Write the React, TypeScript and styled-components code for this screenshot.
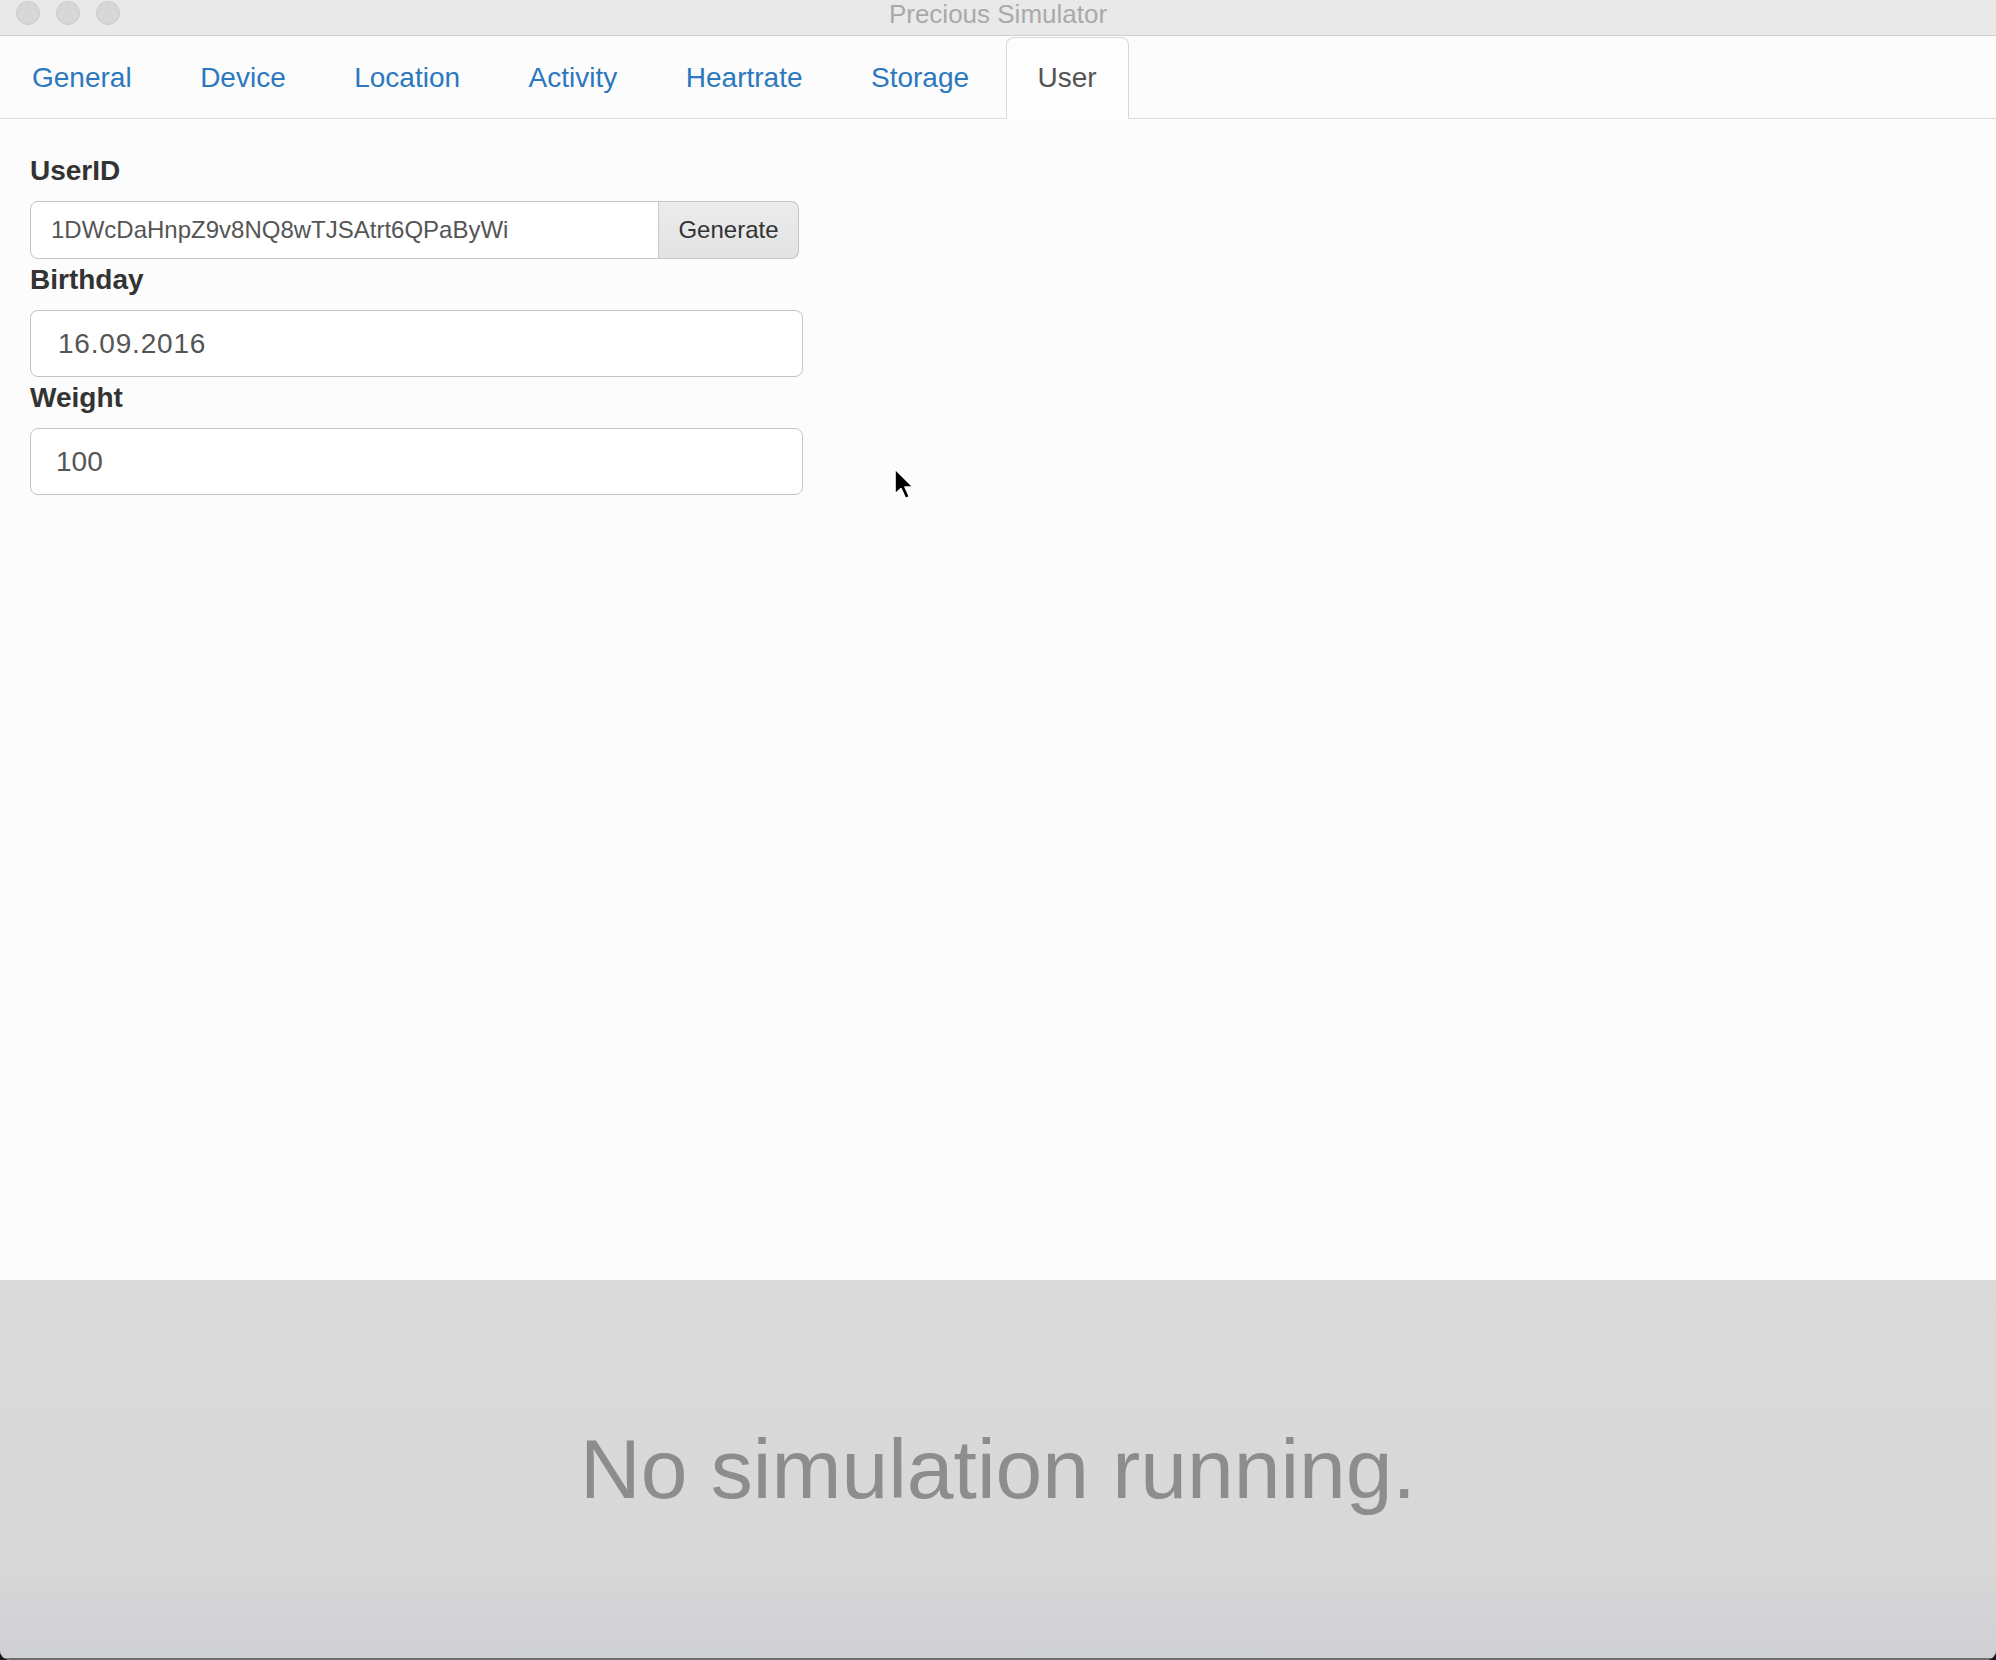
import * as React from 'react';
import styled, { createGlobalStyle } from 'styled-components';

const tabs = ['General', 'Device', 'Location', 'Activity', 'Heartrate', 'Storage', 'User'];

const GlobalStyle = createGlobalStyle`
	html, body {
		margin: 0;
		padding: 0;
		background: #1a1a1a;
	}
	* {
		box-sizing: border-box;
	}
	body {
		font-family: "Liberation Sans", Arial, Helvetica, sans-serif;
	}
`;

const Cursor = () => (
	<CursorWrap>
		<svg width="24" height="36" viewBox="0 0 24 36">
			<path
				d="M2 2 L2 27 L8 21.5 L12.5 31.5 L16.5 29.8 L12 20 L20 20 Z"
				fill="#000"
				stroke="#fff"
				strokeWidth="1.6"
				strokeLinejoin="round"
			/>
		</svg>
	</CursorWrap>
);

export default function App() {
	const [active, setActive] = React.useState('User');
	const [userId, setUserId] = React.useState('1DWcDaHnpZ9v8NQ8wTJSAtrt6QPaByWi');
	const [birthday, setBirthday] = React.useState('16.09.2016');
	const [weight, setWeight] = React.useState('100');

	return (
		<Window>
			<GlobalStyle />
			<TitleBar>
				<Lights>
					<Light />
					<Light />
					<Light />
				</Lights>
				<Title>Precious Simulator</Title>
			</TitleBar>
			<Nav>
				{tabs.map((tab) => (
					<Tab key={tab} $active={tab === active} onClick={() => setActive(tab)}>
						{tab}
					</Tab>
				))}
			</Nav>
			<Content>
				<Label htmlFor="userid">UserID</Label>
				<InputGroup>
					<GroupInput id="userid" value={userId} onChange={(e) => setUserId(e.target.value)} />
					<GenerateButton type="button">Generate</GenerateButton>
				</InputGroup>
				<Label htmlFor="birthday">Birthday</Label>
				<Field id="birthday" $spaced value={birthday} onChange={(e) => setBirthday(e.target.value)} />
				<Label htmlFor="weight">Weight</Label>
				<Field id="weight" value={weight} onChange={(e) => setWeight(e.target.value)} />
				<Cursor />
			</Content>
			<Status>No simulation running.</Status>
		</Window>
	);
}

const Window = styled.div`
	height: 1660px;
	display: flex;
	flex-direction: column;
	background: #fcfcfc;
	border-radius: 0 0 10px 10px;
	overflow: hidden;
`;

const TitleBar = styled.div`
	position: relative;
	height: 36px;
	flex: none;
	display: flex;
	justify-content: center;
	background: #e9e9e9;
	border-bottom: 1px solid #cfcfcf;
`;

const Lights = styled.div`
	position: absolute;
	left: 16px;
	top: 1px;
	display: flex;
	gap: 16px;
`;

const Light = styled.span`
	width: 24px;
	height: 24px;
	border-radius: 50%;
	background: #d6d6d6;
	border: 1px solid #cbcbcb;
`;

const Title = styled.div`
	font-size: 26px;
	line-height: 28px;
	color: #a9a9a9;
`;

const Nav = styled.ul`
	display: flex;
	margin: 0;
	padding: 1px 0 0;
	list-style: none;
	border-bottom: 1px solid #dcdcdc;
	flex: none;
`;

const Tab = styled.li<{ $active?: boolean }>`
	margin-right: 4.5px;
	margin-bottom: -1px;
	padding: 20px 31px;
	font-size: 28px;
	line-height: 40px;
	border: 1px solid ${(p) => (p.$active ? '#d8d8d8' : 'transparent')};
	border-bottom-color: transparent;
	border-radius: 8px 8px 0 0;
	background: ${(p) => (p.$active ? '#fdfdfd' : 'transparent')};
	color: ${(p) => (p.$active ? '#555' : '#2b78be')};
	cursor: pointer;
`;

const Content = styled.div`
	position: relative;
	flex: 1;
	padding: 31px 30px 0;
	display: flex;
	flex-direction: column;
	align-items: flex-start;
`;

const Label = styled.label`
	display: block;
	font-size: 28px;
	line-height: 40px;
	font-weight: bold;
	color: #333;
	padding-top: 1px;
	margin-bottom: 10px;
`;

const InputGroup = styled.div`
	display: flex;
	width: 769px;
	height: 58px;
`;

const GroupInput = styled.input`
	flex: 1;
	min-width: 0;
	height: 100%;
	padding: 0 20px;
	font-family: inherit;
	font-size: 24px;
	color: #555;
	background: #fff;
	border: 1px solid #c4c4c4;
	border-radius: 8px 0 0 8px;
	outline: none;
`;

const GenerateButton = styled.button`
	width: 141px;
	height: 100%;
	font-family: inherit;
	font-size: 24px;
	color: #333;
	background: linear-gradient(#ececec, #e3e3e3);
	border: 1px solid #c4c4c4;
	border-left: 1px solid #c8c8c8;
	border-radius: 0 8px 8px 0;
	margin-left: -1px;
	padding: 0;
`;

const Field = styled.input<{ $spaced?: boolean }>`
	width: 773px;
	height: 67px;
	padding: 0 ${(p) => (p.$spaced ? '27px' : '25px')};
	font-family: inherit;
	font-size: 28px;
	letter-spacing: ${(p) => (p.$spaced ? '0.8px' : '0')};
	color: #555;
	background: #fff;
	border: 1px solid #c4c4c4;
	border-radius: 8px;
	outline: none;
`;

const CursorWrap = styled.div`
	position: absolute;
	left: 893px;
	top: 348px;
	pointer-events: none;
`;

const Status = styled.div`
	flex: none;
	height: 380px;
	display: flex;
	align-items: center;
	justify-content: center;
	font-size: 84px;
	color: #8d8d8d;
	background: linear-gradient(#dadada 0%, #d8d8d8 75%, #cfd0d4 100%);
	border-bottom: 2px solid #6e6e6e;
`;
